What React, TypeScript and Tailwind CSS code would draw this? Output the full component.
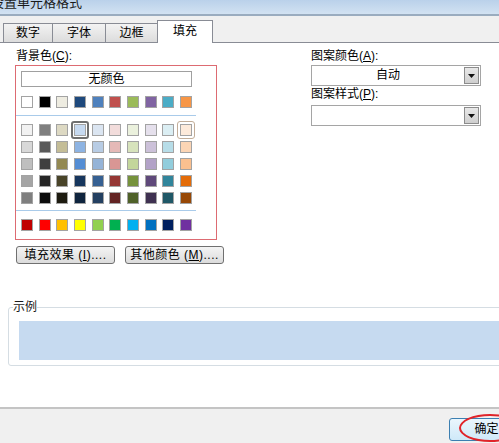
import React from "react"

const themeRow = ["#FFFFFF", "#000000", "#EEECE1", "#1F497D", "#4F81BD", "#C0504D", "#9BBB59", "#8064A2", "#4BACC6", "#F79646"]

const tintRows = [
  ["#F2F2F2", "#7F7F7F", "#DDD9C3", "#C6D9F0", "#DBE5F1", "#F2DCDB", "#EBF1DD", "#E5E0EC", "#DBEEF3", "#FDEADA"],
  ["#D8D8D8", "#595959", "#C4BD97", "#8DB3E2", "#B8CCE4", "#E5B9B7", "#D7E3BC", "#CCC1D9", "#B7DDE8", "#FBD5B5"],
  ["#BFBFBF", "#3F3F3F", "#938953", "#548DD4", "#95B3D7", "#D99694", "#C3D69B", "#B2A2C7", "#92CDDC", "#FAC08F"],
  ["#A5A5A5", "#262626", "#494429", "#17365D", "#366092", "#953734", "#76923C", "#5F497A", "#31859B", "#E36C09"],
  ["#7F7F7F", "#0C0C0C", "#1D1B10", "#0F243E", "#244061", "#632423", "#4F6128", "#3F3151", "#205867", "#974806"],
]

const standardRow = ["#C00000", "#FF0000", "#FFC000", "#FFFF00", "#92D050", "#00B050", "#00B0F0", "#0070C0", "#002060", "#7030A0"]

type SwatchProps = { color: string; selected?: boolean; hover?: boolean }

function Swatch({ color, selected, hover }: SwatchProps) {
  return (
    <span className="relative block w-[12px] h-[12px]">
      <span className="block w-full h-full border border-[#a3a3a3]" style={{ backgroundColor: color }} />
      {selected && <span className="absolute -inset-[3px] border-2 border-[#6f6f6f] rounded-[3px]" />}
      {hover && <span className="absolute -inset-[3px] border border-[#c2ad98] rounded-[3px]" />}
    </span>
  )
}

function SwatchRow({ colors, selected, hover }: { colors: string[]; selected?: number; hover?: number }) {
  return (
    <div className="flex justify-between w-[171px]">
      {colors.map((c, i) => (
        <Swatch key={i} color={c} selected={i === selected} hover={i === hover} />
      ))}
    </div>
  )
}

function Dropdown({ value }: { value?: string }) {
  return (
    <div className="flex items-center h-[21px] w-[170px] border border-[#a5a5a5] bg-white pr-[1px]">
      <div className="flex-1 text-center leading-[19px]">{value}</div>
      <div className="flex items-center justify-center w-[15px] h-[17px] border border-[#8c8c8c] bg-gradient-to-b from-[#e8e8e8] to-[#cfcfcf]">
        <svg width="7" height="4" viewBox="0 0 7 4">
          <path d="M0 0H7L3.5 4Z" fill="#111" />
        </svg>
      </div>
    </div>
  )
}

function Tab({ label, w, active }: { label: string; w: string; active?: boolean }) {
  if (active) {
    return (
      <div className={`${w} h-[23px] -mb-px bg-white border border-b-0 border-[#898c95] text-center leading-[20px]`}>
        {label}
      </div>
    )
  }
  return (
    <div className={`${w} h-[19px] border-l border-t border-[#898c95] bg-gradient-to-b from-[#f3f3f3] to-[#dcdcdc] text-center leading-[18px]`}>
      {label}
    </div>
  )
}

export default function App() {
  return (
    <div
      className="w-[499px] h-[443px] overflow-hidden bg-white flex flex-col text-[12px] text-black"
      style={{ fontFamily: '"Liberation Sans", "Noto Sans CJK SC", sans-serif' }}
    >
      {/* title bar */}
      <div className="h-[16px] shrink-0 overflow-hidden bg-gradient-to-b from-[#bad1ea] to-[#d2e2f2] border-b-2 border-[#9aacbf]">
        <div className="ml-[-9px] mt-[-5px] text-[13px] leading-[16px] text-[#1a1a1a]">设置单元格格式</div>
      </div>

      {/* tabs */}
      <div className="h-[27px] shrink-0 flex items-end pl-[3px] bg-[#f0f0f0] border-b border-[#898c95]">
        <Tab label="数字" w="w-[49px]" />
        <Tab label="字体" w="w-[53px]" />
        <Tab label="边框" w="w-[52px]" />
        <Tab label="填充" w="w-[56px]" active />
      </div>

      {/* content */}
      <div className="flex-1 flex flex-col pt-[5px]">
        <div className="flex">
          <div className="ml-[15px] w-[202px] shrink-0 flex flex-col">
            <div className="pl-[1px] leading-[16px]">
              背景色(<span className="underline">C</span>):
            </div>
            <div className="mt-[1px] h-[175px] border border-[#dd6b72] flex flex-col pl-[5px]">
              <div className="mt-[5px] w-[171px] h-[16px] border border-[#a0a0a0] text-center leading-[14px]">无颜色</div>
              <div className="mt-[9px]">
                <SwatchRow colors={themeRow} />
              </div>
              <div className="mt-[7px] -ml-[5px] w-[180px] h-px bg-[#a9cbea]" />
              <div className="mt-[8px] flex flex-col gap-[5px]">
                {tintRows.map((r, i) => (
                  <SwatchRow key={i} colors={r} selected={i === 0 ? 3 : undefined} hover={i === 0 ? 9 : undefined} />
                ))}
              </div>
              <div className="mt-[6px] -ml-[5px] w-[180px] h-px bg-[#a9cbea]" />
              <div className="mt-[8px]">
                <SwatchRow colors={standardRow} />
              </div>
            </div>
            <div className="mt-[6px] ml-[1px] flex gap-[10px]">
              <button className="shrink-0 w-[99px] h-[18px] border border-[#707070] rounded-[3px] bg-gradient-to-b from-[#f4f4f4] to-[#dcdcdc] leading-[16px] tracking-[0.5px]">
                填充效果 (<span className="underline">I</span>)....
              </button>
              <button className="shrink-0 w-[99px] h-[18px] border border-[#707070] rounded-[3px] bg-gradient-to-b from-[#f4f4f4] to-[#dcdcdc] leading-[16px] tracking-[0.5px]">
                其他颜色 (<span className="underline">M</span>)....
              </button>
            </div>
          </div>

          <div className="ml-[94px] w-[170px] shrink-0 flex flex-col">
            <div className="leading-[16px]">
              图案颜色(<span className="underline">A</span>):
            </div>
            <div className="mt-[1px]">
              <Dropdown value="自动" />
            </div>
            <div className="leading-[16px]">
              图案样式(<span className="underline">P</span>):
            </div>
            <div className="mt-[3px]">
              <Dropdown />
            </div>
          </div>
        </div>

        <fieldset className="mt-[35px] ml-[8px] mr-[-30px] border border-[#d5dde3] rounded-[3px] pl-[10px] pb-[5px]">
          <legend className="ml-[-6px] leading-[16px] text-[#1a1a1a]">示例</legend>
          <div className="mt-[6px] h-[39px] bg-[#c6daf0]" />
        </fieldset>
      </div>

      {/* footer */}
      <div className="relative h-[36px] shrink-0 border-t-2 border-[#c4c4c4] bg-[#f0f0f0] flex items-start pt-[9px] pl-[449px]">
        <button className="shrink-0 w-[75px] h-[23px] border border-[#3c7fb1] rounded-[3px] bg-gradient-to-b from-[#eaf6fd] to-[#cfe9f8] leading-[21px] text-center">
          确定
        </button>
        <span className="absolute left-[459px] top-[5px] w-[62px] h-[28px] border-2 border-[#e0242a] rounded-[50%]" />
      </div>
    </div>
  )
}
